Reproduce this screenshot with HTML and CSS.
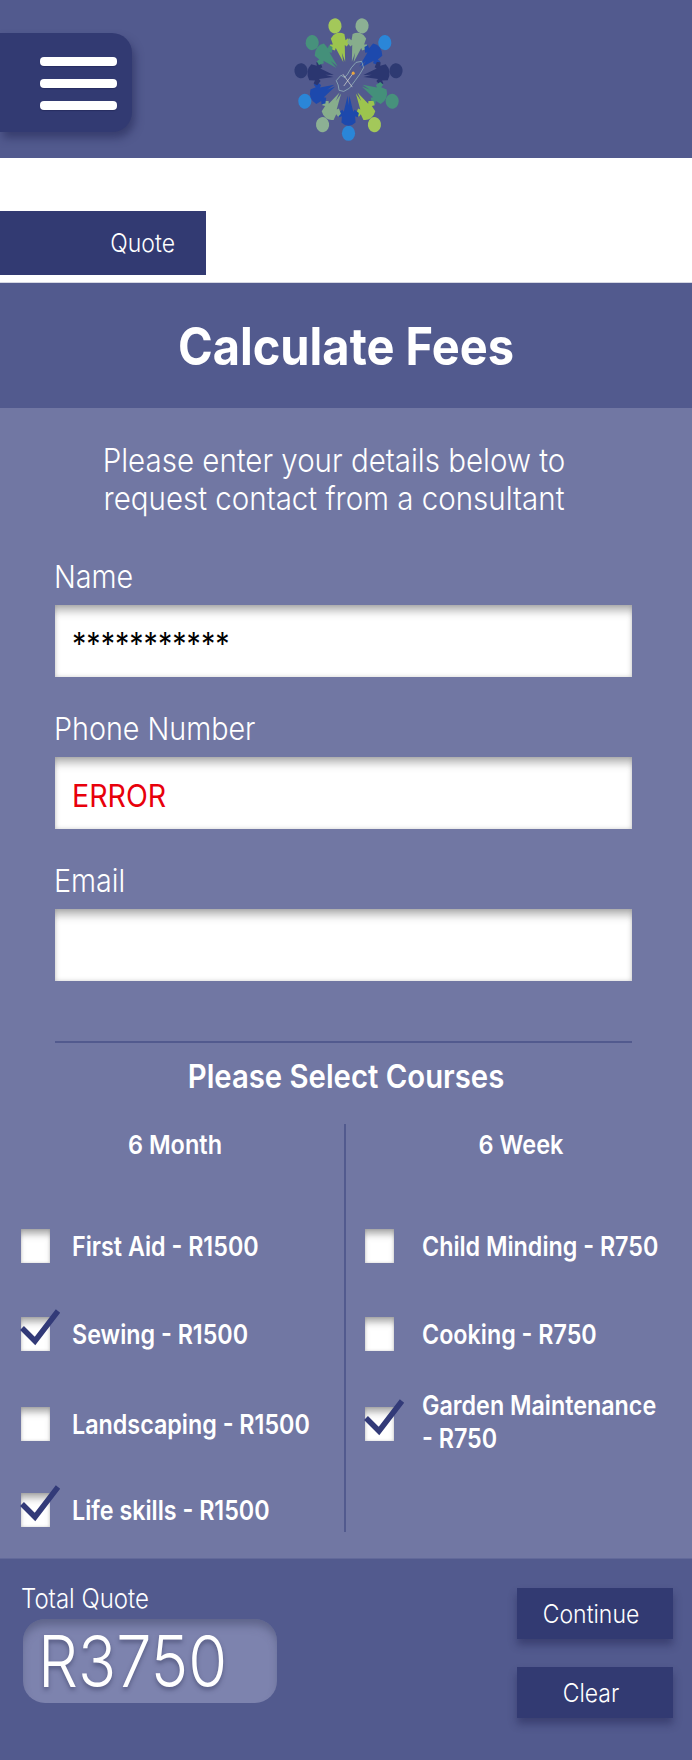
FILE: index.html
```html
<!DOCTYPE html>
<html>

<head>
    <title>Calculate Fees</title>
    <link rel="stylesheet" href="styles.css">
</head>

<body>
    <header class="topbar">
        <button class="menu-button" type="button" aria-label="Menu">
            <span class="menu-line"></span>
            <span class="menu-line"></span>
            <span class="menu-line"></span>
        </button>
        <svg class="logo" viewBox="-60 -60 120 120" preserveAspectRatio="none">
            <defs>
                <g id="person">
                    <circle cx="0" cy="-51" r="7" fill="currentColor" />
                    <path d="M-1 -16 L-5 -31 L-6.5 -29 L-11 -32 L-10 -36 L-7 -35 L-7.5 -41 Q-4 -44 0 -44 Q4 -44 7.5 -41 L7 -35 L10 -36 L11 -32 L6.5 -29 L5 -31 L1 -16 L0 -25 Z" />
                </g>
            </defs>
            <use href="#person" class="p-lime" transform="rotate(-16.4)" />
            <use href="#person" class="p-sage" transform="rotate(16.4)" />
            <use href="#person" class="p-blue" transform="rotate(49.1)" />
            <use href="#person" class="p-navy" transform="rotate(81.8)" />
            <use href="#person" class="p-teal" transform="rotate(114.5)" />
            <use href="#person" class="p-lime" transform="rotate(147.3)" />
            <use href="#person" class="p-blue" transform="rotate(180)" />
            <use href="#person" class="p-sage" transform="rotate(212.7)" />
            <use href="#person" class="p-blue" transform="rotate(245.5)" />
            <use href="#person" class="p-navy" transform="rotate(278.2)" />
            <use href="#person" class="p-teal" transform="rotate(310.9)" />
            <path class="logo-map" d="M-13 2 L-8 -3 L-4 -1 L-1 -4 L3 -10 L8 -15 L14 -16 L16 -10 L12 -4 L7 2 L1 9 L-5 12 L-10 11 L-11 6 Z" />
            <path class="logo-tools" d="M-6 -4 L4 8 M5 -5 L-5 7" />
            <circle class="logo-dot" cx="5" cy="-5" r="1.6" />
        </svg>
    </header>

    <nav class="tab-strip">
        <div class="tab"><span>Quote</span></div>
    </nav>

    <div class="title-band">
        <h1>Calculate Fees</h1>
    </div>

    <main class="panel">
        <p class="intro">Please enter your details below to<br>request contact from a consultant</p>

        <div class="fields">
            <div class="field">
                <label>Name</label>
                <div class="input"><span class="input-text">***********</span></div>
            </div>
            <div class="field">
                <label>Phone Number</label>
                <div class="input error"><span class="input-text">ERROR</span></div>
            </div>
            <div class="field">
                <label>Email</label>
                <div class="input"></div>
            </div>
        </div>

        <div class="rule"></div>
        <h2>Please Select Courses</h2>

        <div class="courses">
            <div class="course-col">
                <h3>6 Month</h3>
                <div class="course"><span class="check"></span><span class="course-name">First Aid - R1500</span></div>
                <div class="course"><span class="check"><svg class="tick" viewBox="0 0 40 34"><path d="M1 18 L14 31 L37 1" /></svg></span><span class="course-name">Sewing - R1500</span></div>
                <div class="course low"><span class="check"></span><span class="course-name">Landscaping - R1500</span></div>
                <div class="course after-low"><span class="check"><svg class="tick" viewBox="0 0 40 34"><path d="M1 18 L14 31 L37 1" /></svg></span><span class="course-name">Life skills - R1500</span></div>
            </div>
            <div class="course-col second">
                <h3>6 Week</h3>
                <div class="course"><span class="check"></span><span class="course-name">Child Minding - R750</span></div>
                <div class="course"><span class="check"></span><span class="course-name">Cooking - R750</span></div>
                <div class="course low"><span class="check"><svg class="tick" viewBox="0 0 40 34"><path d="M1 18 L14 31 L37 1" /></svg></span><span class="course-name two-line">Garden Maintenance<br>- R750</span></div>
            </div>
        </div>
    </main>

    <footer class="totals">
        <div class="total">
            <div class="total-label">Total Quote</div>
            <div class="total-box"><span class="total-value">R3750</span></div>
        </div>
        <div class="actions">
            <button class="action" type="button"><span>Continue</span></button>
            <button class="action" type="button"><span>Clear</span></button>
        </div>
    </footer>
</body>

</html>
```

FILE: styles.css
```css
body {
    margin: 0;
    width: 692px;
    height: 1760px;
    overflow: hidden;
    background-color: #fff;
    font-family: Inter, "Noto Sans", sans-serif;
    color: #fff;
}

.topbar {
    display: flex;
    align-items: flex-start;
    height: 158px;
    background-color: #525a8e;
}

.menu-button {
    display: flex;
    flex-direction: column;
    align-items: flex-end;
    gap: 13px;
    width: 132px;
    height: 99px;
    margin-top: 33px;
    padding: 24px 15px 0 0;
    border: none;
    border-radius: 0 20px 20px 0;
    background-color: #323a72;
    box-shadow: 3px 6px 8px rgba(30, 34, 80, 0.5);
}

.menu-line {
    display: block;
    width: 77px;
    height: 9px;
    border-radius: 4px;
    background-color: #fff;
    box-shadow: 0 1px 1px rgba(30, 34, 80, 0.5);
}

.logo {
    width: 113px;
    height: 129px;
    margin-left: 160px;
    margin-top: 14px;
}

.p-lime {
    fill: #9cc44e;
    color: #a3c85a;
}

.p-sage {
    fill: #87ad8c;
    color: #8cb094;
}

.p-blue {
    fill: #1d49ad;
    color: #2a86d8;
}

.p-navy {
    fill: #2b3670;
    color: #2e3a72;
}

.p-teal {
    fill: #44907a;
    color: #47917c;
}

.logo-map {
    fill: none;
    stroke: #a9cfc8;
    stroke-width: 0.6;
}

.logo-tools {
    fill: none;
    stroke: #d9d9d0;
    stroke-width: 0.7;
}

.logo-dot {
    fill: #eba63c;
}

.tab-strip {
    height: 125px;
    padding-top: 53px;
    box-sizing: border-box;
    border-bottom: 1px solid #d5d7e3;
}

.tab {
    display: flex;
    align-items: center;
    justify-content: flex-end;
    width: 206px;
    height: 64px;
    padding-right: 31px;
    box-sizing: border-box;
    background-color: #323a72;
    font-size: 23px;
    font-weight: 300;
}

.tab span {
    transform: scaleY(1.12);
}

.title-band {
    display: flex;
    align-items: center;
    justify-content: center;
    height: 125px;
    background-color: #525a8e;
}

h1 {
    margin: 0;
    font-size: 47px;
    font-weight: 700;
    transform: scaleY(1.1);
}

.panel {
    height: 1150px;
    padding-top: 37px;
    box-sizing: border-box;
    background-color: #7177a3;
}

.intro {
    margin: 0;
    padding-right: 24px;
    text-align: center;
    font-size: 29.5px;
    font-weight: 300;
    line-height: 34px;
    transform: scaleY(1.12);
}

.fields {
    display: flex;
    flex-direction: column;
    gap: 36px;
    margin-top: 48px;
    padding: 0 60px 0 55px;
}

label {
    display: block;
    height: 44px;
    margin-left: -1px;
    line-height: 34px;
    font-size: 28.7px;
    font-weight: 300;
    transform: scaleY(1.1);
}

.input {
    height: 72px;
    padding: 21px 17px 0;
    box-sizing: border-box;
    background-color: #fff;
    box-shadow: inset 0 10px 8px -4px rgba(90, 90, 90, 0.45), inset 0 0 4px rgba(90, 90, 90, 0.3);
    color: #000;
    font-size: 28.6px;
    line-height: 36px;
}

.input-text {
    display: block;
    transform: scaleY(1.1);
}

.error {
    color: #e8000b;
}

.rule {
    height: 2px;
    margin: 60px 60px 0 55px;
    background-color: #525a8e;
}

h2 {
    margin: 15px 0 0;
    text-align: center;
    font-size: 29.3px;
    font-weight: 600;
    line-height: 38px;
    transform: scaleY(1.1);
}

.courses {
    display: grid;
    grid-template-columns: 346px 346px;
    margin-top: 28px;
}

.course-col {
    display: flex;
    flex-direction: column;
    height: 408px;
    padding-left: 21px;
    box-sizing: border-box;
    border-right: 2px solid #525a8e;
}

.second {
    border-right: none;
    padding-left: 19px;
}

h3 {
    flex: none;
    height: 40px;
    margin: 0 0 62px;
    padding-right: 15px;
    text-align: center;
    font-size: 23.5px;
    font-weight: 600;
    line-height: 42px;
    transform: scaleY(1.12);
}

.course {
    display: flex;
    flex: none;
    align-items: center;
    height: 40px;
}

.course + .course {
    margin-top: 48px;
}

.course + .low {
    margin-top: 50px;
}

.course + .after-low {
    margin-top: 46px;
}

.check {
    position: relative;
    flex: none;
    width: 29px;
    height: 34px;
    background-color: #fff;
    box-shadow: inset 0 8px 7px -3px rgba(90, 90, 90, 0.5), inset 0 0 3px rgba(90, 90, 90, 0.3);
}

.tick {
    position: absolute;
    left: 0;
    top: -7px;
    width: 40px;
    height: 34px;
    overflow: visible;
}

.tick path {
    fill: none;
    stroke: #323a78;
    stroke-width: 5.5;
}

.course-name {
    margin-left: 22px;
    font-size: 23.3px;
    font-weight: 600;
    line-height: 29px;
    transform: scaleY(1.15);
}

.second .course-name {
    margin-left: 28px;
}

.second .two-line {
    margin-bottom: 4px;
}

.totals {
    display: flex;
    justify-content: space-between;
    height: 202px;
    padding: 29px 19px 0 21px;
    box-sizing: border-box;
    background-color: #525a8e;
    border-top: 1px solid #62699a;
}

.total-label {
    font-size: 24px;
    font-weight: 300;
    line-height: 22px;
    transform: scaleY(1.13);
}

.total-box {
    display: flex;
    align-items: center;
    width: 254px;
    height: 84px;
    margin-top: 9px;
    margin-left: 2px;
    padding-left: 15px;
    box-sizing: border-box;
    border-radius: 22px;
    background-color: #7d83ae;
    box-shadow: inset 0 8px 8px -2px rgba(70, 74, 110, 0.55);
}

.total-value {
    display: block;
    font-size: 63px;
    font-weight: 350;
    text-shadow: 0 3px 4px rgba(50, 54, 90, 0.5);
    transform: scaleY(1.13);
}

.actions {
    display: flex;
    flex-direction: column;
    gap: 28px;
}

.action {
    width: 156px;
    height: 51px;
    padding: 0 8px 0 0;
    border: none;
    background-color: #323a72;
    box-shadow: 0 6px 8px rgba(30, 34, 80, 0.45);
    color: #fff;
    font-family: Inter, "Noto Sans", sans-serif;
    font-size: 23px;
    font-weight: 300;
}

.action span {
    display: block;
    transform: scaleY(1.12);
}
```
